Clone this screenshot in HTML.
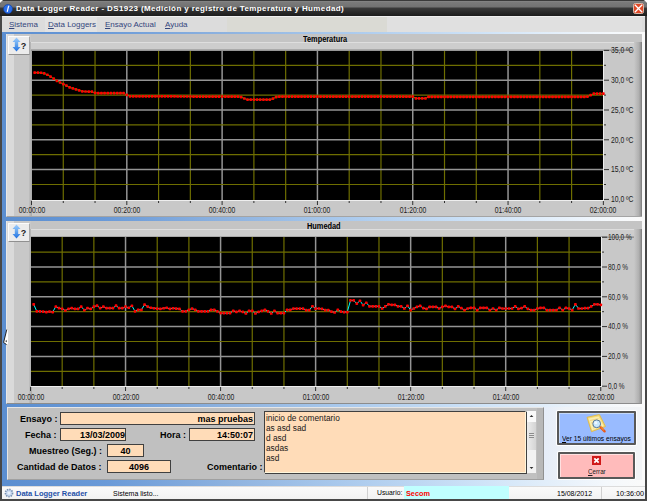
<!DOCTYPE html>
<html><head><meta charset="utf-8">
<style>
*{margin:0;padding:0;box-sizing:border-box}
html,body{width:647px;height:501px;overflow:hidden;background:#474747}
body{position:relative;font-family:"Liberation Sans",sans-serif;color:#000}
.a{position:absolute}
.t{position:absolute;white-space:nowrap;line-height:1}
.b{font-weight:bold}
</style></head><body>
<!-- title bar -->
<div class="a" style="left:0;top:0;width:647px;height:16px;background:linear-gradient(#3a3a3a 0,#3a3a3a 1px,#8a8a8a 1px,#7a7a7a 2px,#727272 7px,#3a3a3a 8px,#2e2e2e 11px,#1c1c1c 16px);border-radius:5px 5px 0 0"></div>
<div class="a" style="left:0;top:0;width:3px;height:3px;background:#fff;clip-path:polygon(0 0,100% 0,0 100%)"></div>
<div class="a" style="left:644px;top:0;width:3px;height:3px;background:#fff;clip-path:polygon(0 0,100% 0,100% 100%)"></div>
<svg class="a" style="left:3px;top:4px" width="10" height="10" viewBox="0 0 10 10"><circle cx="5" cy="5" r="4.5" fill="#2a6ee8"/><circle cx="5" cy="5" r="4.5" fill="none" stroke="#1040a0" stroke-width="0.6"/><path d="M5.6 2.2 L4.2 7.8" stroke="#fff" stroke-width="1.2"/><circle cx="5.8" cy="2" r="0.6" fill="#fff"/></svg>
<div class="t b" style="left:16px;top:5px;font-size:8px;color:#fff;letter-spacing:0.38px">Data Logger Reader - DS1923 (Medición y registro de Temperatura y Humedad)</div>
<svg class="a" style="left:633px;top:3px" width="11" height="11" viewBox="0 0 11 11"><rect x="0.5" y="0.5" width="10" height="10" rx="1.8" fill="#d84020" stroke="#e0c4b4" stroke-width="0.9"/><rect x="1.2" y="1.2" width="8.6" height="8.6" rx="1" fill="#e04a28"/><path d="M1.8 1.8 L9.2 9.2 M9.2 1.8 L1.8 9.2" stroke="#fff" stroke-width="1.3"/></svg>
<!-- menu -->
<div class="a" style="left:2px;top:16px;width:643px;height:16px;background:#dcdcdc;border-top:1px solid #f0f0f0"></div>
<div class="a" style="left:45px;top:17px;width:52px;height:15px;background:#e2e2e2"></div>
<div class="a" style="left:227px;top:17px;width:160px;height:15px;background:#dadad4"></div>
<div class="a" style="left:387px;top:17px;width:255px;height:15px;background:#e0e0e0"></div>
<div class="t" style="left:9px;top:21px;font-size:8px;color:#34467c"><u>S</u>istema</div>
<div class="t" style="left:48px;top:21px;font-size:8px;color:#34467c"><u>D</u>ata Loggers</div>
<div class="t" style="left:105px;top:21px;font-size:8px;color:#34467c"><u>E</u>nsayo Actual</div>
<div class="t" style="left:165px;top:21px;font-size:8px;color:#34467c"><u>A</u>yuda</div>
<!-- blue line + strips -->
<div class="a" style="left:2px;top:32px;width:643px;height:2px;background:linear-gradient(90deg,#5b8ed0 0,#6a9ad8 15.7%,#90b4e0 36%,#a8c8ec 52%,#d0e4f8 75.6%,#f4f8fc 94.5%,#fafafa 100%)"></div>
<div class="a" style="left:2px;top:32px;width:5px;height:454px;background:#5b8ed0"></div>
<div class="a" style="left:642px;top:32px;width:3px;height:454px;background:#fafafa"></div>
<div class="a" style="left:7px;top:217px;width:635px;height:4px;background:linear-gradient(90deg,#5b8ed0 0,#6a9ad8 15.7%,#90b4e0 36%,#a8c8ec 52%,#d0e4f8 75.6%,#f4f8fc 94.5%,#fafafa 100%)"></div>
<div class="a" style="left:7px;top:480px;width:635px;height:6px;background:linear-gradient(90deg,#5b8ed0 0,#6a9ad8 15.7%,#90b4e0 36%,#a8c8ec 52%,#d0e4f8 75.6%,#f4f8fc 94.5%,#fafafa 100%)"></div>

<!-- panel 1 -->
<div class="a" style="left:6px;top:34px;width:636px;height:183px;background:#c8c8c8;border-left:1px solid #e8e8e8;border-bottom:1px solid #a4a4a4"></div>
<div class="a" style="left:7px;top:34px;width:7px;height:182px;background:#dadada"></div>
<div class="a" style="left:29px;top:42px;width:3px;height:174px;background:linear-gradient(90deg,#c0c0c0,#a8a8a8)"></div>
<div class="a" style="left:31px;top:34px;width:611px;height:8px;background:#c4c4c4"></div>
<div class="a" style="left:31px;top:42px;width:611px;height:1px;background:#dedede"></div>
<div class="a" style="left:31px;top:43px;width:603px;height:6px;background:#cdcdcd"></div>
<div class="a" style="left:31px;top:49px;width:603px;height:2px;background:linear-gradient(#b4b4b4,#8c8c8c)"></div>
<div class="a" style="left:634px;top:42px;width:8px;height:174px;background:linear-gradient(90deg,#c8c8c8,#b0b0b0 60%,#909090 90%,#707070)"></div>
<div class="t b" style="left:303px;top:35px;font-size:9px;transform:scaleX(0.82);transform-origin:0 0">Temperatura</div>
<svg class="a" style="left:7px;top:34px" width="635" height="183"><rect x="25" y="17" width="571" height="149" fill="#000"/>
<line x1="56.27" y1="17" x2="56.27" y2="166" stroke="#6e6e00" stroke-width="1.2"/>
<line x1="88.04" y1="17" x2="88.04" y2="166" stroke="#6e6e00" stroke-width="1.2"/>
<line x1="119.81" y1="17" x2="119.81" y2="166" stroke="#949494" stroke-width="1.5"/>
<line x1="151.58" y1="17" x2="151.58" y2="166" stroke="#6e6e00" stroke-width="1.2"/>
<line x1="183.35" y1="17" x2="183.35" y2="166" stroke="#6e6e00" stroke-width="1.2"/>
<line x1="215.12" y1="17" x2="215.12" y2="166" stroke="#949494" stroke-width="1.5"/>
<line x1="246.89" y1="17" x2="246.89" y2="166" stroke="#6e6e00" stroke-width="1.2"/>
<line x1="278.66" y1="17" x2="278.66" y2="166" stroke="#6e6e00" stroke-width="1.2"/>
<line x1="310.43" y1="17" x2="310.43" y2="166" stroke="#949494" stroke-width="1.5"/>
<line x1="342.20" y1="17" x2="342.20" y2="166" stroke="#6e6e00" stroke-width="1.2"/>
<line x1="373.97" y1="17" x2="373.97" y2="166" stroke="#6e6e00" stroke-width="1.2"/>
<line x1="405.74" y1="17" x2="405.74" y2="166" stroke="#949494" stroke-width="1.5"/>
<line x1="437.51" y1="17" x2="437.51" y2="166" stroke="#6e6e00" stroke-width="1.2"/>
<line x1="469.28" y1="17" x2="469.28" y2="166" stroke="#6e6e00" stroke-width="1.2"/>
<line x1="501.05" y1="17" x2="501.05" y2="166" stroke="#949494" stroke-width="1.5"/>
<line x1="532.82" y1="17" x2="532.82" y2="166" stroke="#6e6e00" stroke-width="1.2"/>
<line x1="564.59" y1="17" x2="564.59" y2="166" stroke="#6e6e00" stroke-width="1.2"/>
<line x1="25" y1="31.30" x2="596" y2="31.30" stroke="#6e6e00" stroke-width="1.2"/>
<line x1="25" y1="46.20" x2="596" y2="46.20" stroke="#949494" stroke-width="1.5"/>
<line x1="25" y1="61.10" x2="596" y2="61.10" stroke="#6e6e00" stroke-width="1.2"/>
<line x1="25" y1="76.00" x2="596" y2="76.00" stroke="#949494" stroke-width="1.5"/>
<line x1="25" y1="90.90" x2="596" y2="90.90" stroke="#6e6e00" stroke-width="1.2"/>
<line x1="25" y1="105.80" x2="596" y2="105.80" stroke="#949494" stroke-width="1.5"/>
<line x1="25" y1="120.70" x2="596" y2="120.70" stroke="#6e6e00" stroke-width="1.2"/>
<line x1="25" y1="135.60" x2="596" y2="135.60" stroke="#949494" stroke-width="1.5"/>
<line x1="25" y1="150.50" x2="596" y2="150.50" stroke="#6e6e00" stroke-width="1.2"/>
<line x1="25" y1="166.5" x2="597" y2="166.5" stroke="#eeeeee" stroke-width="1"/>
<line x1="596.5" y1="17" x2="596.5" y2="167" stroke="#eeeeee" stroke-width="1"/>
<line x1="24.50" y1="167" x2="24.50" y2="171" stroke="#303030" stroke-width="1"/>
<line x1="56.27" y1="167" x2="56.27" y2="169" stroke="#303030" stroke-width="1"/>
<line x1="88.04" y1="167" x2="88.04" y2="169" stroke="#303030" stroke-width="1"/>
<line x1="119.81" y1="167" x2="119.81" y2="171" stroke="#303030" stroke-width="1"/>
<line x1="151.58" y1="167" x2="151.58" y2="169" stroke="#303030" stroke-width="1"/>
<line x1="183.35" y1="167" x2="183.35" y2="169" stroke="#303030" stroke-width="1"/>
<line x1="215.12" y1="167" x2="215.12" y2="171" stroke="#303030" stroke-width="1"/>
<line x1="246.89" y1="167" x2="246.89" y2="169" stroke="#303030" stroke-width="1"/>
<line x1="278.66" y1="167" x2="278.66" y2="169" stroke="#303030" stroke-width="1"/>
<line x1="310.43" y1="167" x2="310.43" y2="171" stroke="#303030" stroke-width="1"/>
<line x1="342.20" y1="167" x2="342.20" y2="169" stroke="#303030" stroke-width="1"/>
<line x1="373.97" y1="167" x2="373.97" y2="169" stroke="#303030" stroke-width="1"/>
<line x1="405.74" y1="167" x2="405.74" y2="171" stroke="#303030" stroke-width="1"/>
<line x1="437.51" y1="167" x2="437.51" y2="169" stroke="#303030" stroke-width="1"/>
<line x1="469.28" y1="167" x2="469.28" y2="169" stroke="#303030" stroke-width="1"/>
<line x1="501.05" y1="167" x2="501.05" y2="171" stroke="#303030" stroke-width="1"/>
<line x1="532.82" y1="167" x2="532.82" y2="169" stroke="#303030" stroke-width="1"/>
<line x1="564.59" y1="167" x2="564.59" y2="169" stroke="#303030" stroke-width="1"/>
<line x1="596.36" y1="167" x2="596.36" y2="171" stroke="#303030" stroke-width="1"/>
<line x1="597" y1="16.40" x2="602" y2="16.40" stroke="#303030" stroke-width="1"/>
<line x1="597" y1="31.30" x2="599" y2="31.30" stroke="#303030" stroke-width="1"/>
<line x1="597" y1="46.20" x2="602" y2="46.20" stroke="#303030" stroke-width="1"/>
<line x1="597" y1="61.10" x2="599" y2="61.10" stroke="#303030" stroke-width="1"/>
<line x1="597" y1="76.00" x2="602" y2="76.00" stroke="#303030" stroke-width="1"/>
<line x1="597" y1="90.90" x2="599" y2="90.90" stroke="#303030" stroke-width="1"/>
<line x1="597" y1="105.80" x2="602" y2="105.80" stroke="#303030" stroke-width="1"/>
<line x1="597" y1="120.70" x2="599" y2="120.70" stroke="#303030" stroke-width="1"/>
<line x1="597" y1="135.60" x2="602" y2="135.60" stroke="#303030" stroke-width="1"/>
<line x1="597" y1="150.50" x2="599" y2="150.50" stroke="#303030" stroke-width="1"/>
<line x1="597" y1="165.40" x2="602" y2="165.40" stroke="#303030" stroke-width="1"/>
<path d="M27.7,38.6 L30.9,38.7 L34.0,38.8 L37.2,39.5 L40.4,40.8 L43.6,42.6 L46.7,44.7 L49.9,46.8 L53.1,48.5 L56.3,50.1 L59.4,51.7 L62.6,53.3 L65.8,54.4 L69.0,55.4 L72.2,56.4 L75.3,57.3 L78.5,57.5 L81.7,57.6 L84.9,57.7 L88.0,58.8 L91.2,59.2 L94.4,59.2 L97.6,59.2 L100.7,59.2 L103.9,59.2 L107.1,59.2 L110.3,59.2 L113.5,59.2 L116.6,59.2 L119.8,60.9 L123.0,62.3 L126.2,62.3 L129.3,62.3 L132.5,62.3 L135.7,62.3 L138.9,62.4 L142.0,62.4 L145.2,62.4 L148.4,62.4 L151.6,62.4 L154.8,62.4 L157.9,62.4 L161.1,62.4 L164.3,62.5 L167.5,62.5 L170.6,62.5 L173.8,62.5 L177.0,62.5 L180.2,62.5 L183.3,62.5 L186.5,62.5 L189.7,62.5 L192.9,62.6 L196.1,62.6 L199.2,62.6 L202.4,62.6 L205.6,62.6 L208.8,62.6 L211.9,62.6 L215.1,62.6 L218.3,62.6 L221.5,62.7 L224.7,62.7 L227.8,62.7 L231.0,62.7 L234.2,63.2 L237.4,64.5 L240.5,65.6 L243.7,65.6 L246.9,65.6 L250.1,65.6 L253.2,65.6 L256.4,65.6 L259.6,65.6 L262.8,65.6 L266.0,64.7 L269.1,63.1 L272.3,62.7 L275.5,62.7 L278.7,62.7 L281.8,62.7 L285.0,62.7 L288.2,62.7 L291.4,62.7 L294.5,62.7 L297.7,62.7 L300.9,62.7 L304.1,62.7 L307.3,62.7 L310.4,62.7 L313.6,62.7 L316.8,62.7 L320.0,62.7 L323.1,62.7 L326.3,62.7 L329.5,62.7 L332.7,62.7 L335.8,62.7 L339.0,62.7 L342.2,62.7 L345.4,62.7 L348.6,62.7 L351.7,62.7 L354.9,62.7 L358.1,62.7 L361.3,62.7 L364.4,62.7 L367.6,62.7 L370.8,62.7 L374.0,62.7 L377.1,62.7 L380.3,62.7 L383.5,62.7 L386.7,62.7 L389.9,62.7 L393.0,62.7 L396.2,62.7 L399.4,62.7 L402.6,62.7 L405.7,62.7 L408.9,64.3 L412.1,64.4 L415.3,64.4 L418.4,64.4 L421.6,62.9 L424.8,62.9 L428.0,62.9 L431.2,62.9 L434.3,62.9 L437.5,62.9 L440.7,62.9 L443.9,62.9 L447.0,62.9 L450.2,62.9 L453.4,62.9 L456.6,62.9 L459.7,62.9 L462.9,62.9 L466.1,62.9 L469.3,62.9 L472.5,62.9 L475.6,62.9 L478.8,62.9 L482.0,62.9 L485.2,62.9 L488.3,62.9 L491.5,62.9 L494.7,62.9 L497.9,62.9 L501.1,62.9 L504.2,62.9 L507.4,62.9 L510.6,62.9 L513.8,62.9 L516.9,62.9 L520.1,62.9 L523.3,62.9 L526.5,62.9 L529.6,62.9 L532.8,62.9 L536.0,62.9 L539.2,62.9 L542.4,62.9 L545.5,62.9 L548.7,62.9 L551.9,62.9 L555.1,62.9 L558.2,62.9 L561.4,62.9 L564.6,62.9 L567.8,62.9 L570.9,62.9 L574.1,62.9 L577.3,62.9 L580.5,62.7 L583.7,61.2 L586.8,59.7 L590.0,59.6 L593.2,59.6 L596.4,59.6" fill="none" stroke="#00ff00" stroke-width="1"/>
<rect x="26.33" y="37.23" width="2.7" height="2.7" rx="0.7" fill="#ff0000"/>
<rect x="29.50" y="37.33" width="2.7" height="2.7" rx="0.7" fill="#ff0000"/>
<rect x="32.68" y="37.42" width="2.7" height="2.7" rx="0.7" fill="#ff0000"/>
<rect x="35.86" y="38.11" width="2.7" height="2.7" rx="0.7" fill="#ff0000"/>
<rect x="39.04" y="39.41" width="2.7" height="2.7" rx="0.7" fill="#ff0000"/>
<rect x="42.21" y="41.23" width="2.7" height="2.7" rx="0.7" fill="#ff0000"/>
<rect x="45.39" y="43.36" width="2.7" height="2.7" rx="0.7" fill="#ff0000"/>
<rect x="48.57" y="45.49" width="2.7" height="2.7" rx="0.7" fill="#ff0000"/>
<rect x="51.74" y="47.15" width="2.7" height="2.7" rx="0.7" fill="#ff0000"/>
<rect x="54.92" y="48.79" width="2.7" height="2.7" rx="0.7" fill="#ff0000"/>
<rect x="58.10" y="50.37" width="2.7" height="2.7" rx="0.7" fill="#ff0000"/>
<rect x="61.27" y="51.96" width="2.7" height="2.7" rx="0.7" fill="#ff0000"/>
<rect x="64.45" y="53.04" width="2.7" height="2.7" rx="0.7" fill="#ff0000"/>
<rect x="67.63" y="54.04" width="2.7" height="2.7" rx="0.7" fill="#ff0000"/>
<rect x="70.81" y="55.02" width="2.7" height="2.7" rx="0.7" fill="#ff0000"/>
<rect x="73.98" y="56.00" width="2.7" height="2.7" rx="0.7" fill="#ff0000"/>
<rect x="77.16" y="56.15" width="2.7" height="2.7" rx="0.7" fill="#ff0000"/>
<rect x="80.34" y="56.25" width="2.7" height="2.7" rx="0.7" fill="#ff0000"/>
<rect x="83.51" y="56.35" width="2.7" height="2.7" rx="0.7" fill="#ff0000"/>
<rect x="86.69" y="57.49" width="2.7" height="2.7" rx="0.7" fill="#ff0000"/>
<rect x="89.87" y="57.85" width="2.7" height="2.7" rx="0.7" fill="#ff0000"/>
<rect x="93.04" y="57.85" width="2.7" height="2.7" rx="0.7" fill="#ff0000"/>
<rect x="96.22" y="57.85" width="2.7" height="2.7" rx="0.7" fill="#ff0000"/>
<rect x="99.40" y="57.85" width="2.7" height="2.7" rx="0.7" fill="#ff0000"/>
<rect x="102.58" y="57.85" width="2.7" height="2.7" rx="0.7" fill="#ff0000"/>
<rect x="105.75" y="57.85" width="2.7" height="2.7" rx="0.7" fill="#ff0000"/>
<rect x="108.93" y="57.85" width="2.7" height="2.7" rx="0.7" fill="#ff0000"/>
<rect x="112.11" y="57.85" width="2.7" height="2.7" rx="0.7" fill="#ff0000"/>
<rect x="115.28" y="57.85" width="2.7" height="2.7" rx="0.7" fill="#ff0000"/>
<rect x="118.46" y="59.59" width="2.7" height="2.7" rx="0.7" fill="#ff0000"/>
<rect x="121.64" y="60.95" width="2.7" height="2.7" rx="0.7" fill="#ff0000"/>
<rect x="124.81" y="60.97" width="2.7" height="2.7" rx="0.7" fill="#ff0000"/>
<rect x="127.99" y="60.98" width="2.7" height="2.7" rx="0.7" fill="#ff0000"/>
<rect x="131.17" y="60.99" width="2.7" height="2.7" rx="0.7" fill="#ff0000"/>
<rect x="134.34" y="61.00" width="2.7" height="2.7" rx="0.7" fill="#ff0000"/>
<rect x="137.52" y="61.01" width="2.7" height="2.7" rx="0.7" fill="#ff0000"/>
<rect x="140.70" y="61.02" width="2.7" height="2.7" rx="0.7" fill="#ff0000"/>
<rect x="143.88" y="61.03" width="2.7" height="2.7" rx="0.7" fill="#ff0000"/>
<rect x="147.05" y="61.05" width="2.7" height="2.7" rx="0.7" fill="#ff0000"/>
<rect x="150.23" y="61.06" width="2.7" height="2.7" rx="0.7" fill="#ff0000"/>
<rect x="153.41" y="61.07" width="2.7" height="2.7" rx="0.7" fill="#ff0000"/>
<rect x="156.58" y="61.08" width="2.7" height="2.7" rx="0.7" fill="#ff0000"/>
<rect x="159.76" y="61.09" width="2.7" height="2.7" rx="0.7" fill="#ff0000"/>
<rect x="162.94" y="61.10" width="2.7" height="2.7" rx="0.7" fill="#ff0000"/>
<rect x="166.12" y="61.11" width="2.7" height="2.7" rx="0.7" fill="#ff0000"/>
<rect x="169.29" y="61.13" width="2.7" height="2.7" rx="0.7" fill="#ff0000"/>
<rect x="172.47" y="61.14" width="2.7" height="2.7" rx="0.7" fill="#ff0000"/>
<rect x="175.65" y="61.15" width="2.7" height="2.7" rx="0.7" fill="#ff0000"/>
<rect x="178.82" y="61.16" width="2.7" height="2.7" rx="0.7" fill="#ff0000"/>
<rect x="182.00" y="61.17" width="2.7" height="2.7" rx="0.7" fill="#ff0000"/>
<rect x="185.18" y="61.18" width="2.7" height="2.7" rx="0.7" fill="#ff0000"/>
<rect x="188.35" y="61.19" width="2.7" height="2.7" rx="0.7" fill="#ff0000"/>
<rect x="191.53" y="61.21" width="2.7" height="2.7" rx="0.7" fill="#ff0000"/>
<rect x="194.71" y="61.22" width="2.7" height="2.7" rx="0.7" fill="#ff0000"/>
<rect x="197.88" y="61.23" width="2.7" height="2.7" rx="0.7" fill="#ff0000"/>
<rect x="201.06" y="61.24" width="2.7" height="2.7" rx="0.7" fill="#ff0000"/>
<rect x="204.24" y="61.25" width="2.7" height="2.7" rx="0.7" fill="#ff0000"/>
<rect x="207.42" y="61.26" width="2.7" height="2.7" rx="0.7" fill="#ff0000"/>
<rect x="210.59" y="61.27" width="2.7" height="2.7" rx="0.7" fill="#ff0000"/>
<rect x="213.77" y="61.29" width="2.7" height="2.7" rx="0.7" fill="#ff0000"/>
<rect x="216.95" y="61.30" width="2.7" height="2.7" rx="0.7" fill="#ff0000"/>
<rect x="220.12" y="61.31" width="2.7" height="2.7" rx="0.7" fill="#ff0000"/>
<rect x="223.30" y="61.32" width="2.7" height="2.7" rx="0.7" fill="#ff0000"/>
<rect x="226.48" y="61.33" width="2.7" height="2.7" rx="0.7" fill="#ff0000"/>
<rect x="229.66" y="61.34" width="2.7" height="2.7" rx="0.7" fill="#ff0000"/>
<rect x="232.83" y="61.84" width="2.7" height="2.7" rx="0.7" fill="#ff0000"/>
<rect x="236.01" y="63.16" width="2.7" height="2.7" rx="0.7" fill="#ff0000"/>
<rect x="239.19" y="64.25" width="2.7" height="2.7" rx="0.7" fill="#ff0000"/>
<rect x="242.36" y="64.25" width="2.7" height="2.7" rx="0.7" fill="#ff0000"/>
<rect x="245.54" y="64.25" width="2.7" height="2.7" rx="0.7" fill="#ff0000"/>
<rect x="248.72" y="64.25" width="2.7" height="2.7" rx="0.7" fill="#ff0000"/>
<rect x="251.89" y="64.25" width="2.7" height="2.7" rx="0.7" fill="#ff0000"/>
<rect x="255.07" y="64.25" width="2.7" height="2.7" rx="0.7" fill="#ff0000"/>
<rect x="258.25" y="64.25" width="2.7" height="2.7" rx="0.7" fill="#ff0000"/>
<rect x="261.42" y="64.25" width="2.7" height="2.7" rx="0.7" fill="#ff0000"/>
<rect x="264.60" y="63.31" width="2.7" height="2.7" rx="0.7" fill="#ff0000"/>
<rect x="267.78" y="61.77" width="2.7" height="2.7" rx="0.7" fill="#ff0000"/>
<rect x="270.96" y="61.35" width="2.7" height="2.7" rx="0.7" fill="#ff0000"/>
<rect x="274.13" y="61.35" width="2.7" height="2.7" rx="0.7" fill="#ff0000"/>
<rect x="277.31" y="61.35" width="2.7" height="2.7" rx="0.7" fill="#ff0000"/>
<rect x="280.49" y="61.35" width="2.7" height="2.7" rx="0.7" fill="#ff0000"/>
<rect x="283.66" y="61.35" width="2.7" height="2.7" rx="0.7" fill="#ff0000"/>
<rect x="286.84" y="61.35" width="2.7" height="2.7" rx="0.7" fill="#ff0000"/>
<rect x="290.02" y="61.35" width="2.7" height="2.7" rx="0.7" fill="#ff0000"/>
<rect x="293.19" y="61.35" width="2.7" height="2.7" rx="0.7" fill="#ff0000"/>
<rect x="296.37" y="61.35" width="2.7" height="2.7" rx="0.7" fill="#ff0000"/>
<rect x="299.55" y="61.35" width="2.7" height="2.7" rx="0.7" fill="#ff0000"/>
<rect x="302.73" y="61.35" width="2.7" height="2.7" rx="0.7" fill="#ff0000"/>
<rect x="305.90" y="61.35" width="2.7" height="2.7" rx="0.7" fill="#ff0000"/>
<rect x="309.08" y="61.35" width="2.7" height="2.7" rx="0.7" fill="#ff0000"/>
<rect x="312.26" y="61.35" width="2.7" height="2.7" rx="0.7" fill="#ff0000"/>
<rect x="315.43" y="61.35" width="2.7" height="2.7" rx="0.7" fill="#ff0000"/>
<rect x="318.61" y="61.35" width="2.7" height="2.7" rx="0.7" fill="#ff0000"/>
<rect x="321.79" y="61.35" width="2.7" height="2.7" rx="0.7" fill="#ff0000"/>
<rect x="324.96" y="61.35" width="2.7" height="2.7" rx="0.7" fill="#ff0000"/>
<rect x="328.14" y="61.35" width="2.7" height="2.7" rx="0.7" fill="#ff0000"/>
<rect x="331.32" y="61.35" width="2.7" height="2.7" rx="0.7" fill="#ff0000"/>
<rect x="334.50" y="61.35" width="2.7" height="2.7" rx="0.7" fill="#ff0000"/>
<rect x="337.67" y="61.35" width="2.7" height="2.7" rx="0.7" fill="#ff0000"/>
<rect x="340.85" y="61.35" width="2.7" height="2.7" rx="0.7" fill="#ff0000"/>
<rect x="344.03" y="61.35" width="2.7" height="2.7" rx="0.7" fill="#ff0000"/>
<rect x="347.20" y="61.35" width="2.7" height="2.7" rx="0.7" fill="#ff0000"/>
<rect x="350.38" y="61.35" width="2.7" height="2.7" rx="0.7" fill="#ff0000"/>
<rect x="353.56" y="61.35" width="2.7" height="2.7" rx="0.7" fill="#ff0000"/>
<rect x="356.74" y="61.35" width="2.7" height="2.7" rx="0.7" fill="#ff0000"/>
<rect x="359.91" y="61.35" width="2.7" height="2.7" rx="0.7" fill="#ff0000"/>
<rect x="363.09" y="61.35" width="2.7" height="2.7" rx="0.7" fill="#ff0000"/>
<rect x="366.27" y="61.35" width="2.7" height="2.7" rx="0.7" fill="#ff0000"/>
<rect x="369.44" y="61.35" width="2.7" height="2.7" rx="0.7" fill="#ff0000"/>
<rect x="372.62" y="61.35" width="2.7" height="2.7" rx="0.7" fill="#ff0000"/>
<rect x="375.80" y="61.35" width="2.7" height="2.7" rx="0.7" fill="#ff0000"/>
<rect x="378.97" y="61.35" width="2.7" height="2.7" rx="0.7" fill="#ff0000"/>
<rect x="382.15" y="61.35" width="2.7" height="2.7" rx="0.7" fill="#ff0000"/>
<rect x="385.33" y="61.35" width="2.7" height="2.7" rx="0.7" fill="#ff0000"/>
<rect x="388.51" y="61.35" width="2.7" height="2.7" rx="0.7" fill="#ff0000"/>
<rect x="391.68" y="61.35" width="2.7" height="2.7" rx="0.7" fill="#ff0000"/>
<rect x="394.86" y="61.35" width="2.7" height="2.7" rx="0.7" fill="#ff0000"/>
<rect x="398.04" y="61.35" width="2.7" height="2.7" rx="0.7" fill="#ff0000"/>
<rect x="401.21" y="61.35" width="2.7" height="2.7" rx="0.7" fill="#ff0000"/>
<rect x="404.39" y="61.35" width="2.7" height="2.7" rx="0.7" fill="#ff0000"/>
<rect x="407.57" y="62.98" width="2.7" height="2.7" rx="0.7" fill="#ff0000"/>
<rect x="410.74" y="63.05" width="2.7" height="2.7" rx="0.7" fill="#ff0000"/>
<rect x="413.92" y="63.05" width="2.7" height="2.7" rx="0.7" fill="#ff0000"/>
<rect x="417.10" y="63.05" width="2.7" height="2.7" rx="0.7" fill="#ff0000"/>
<rect x="420.27" y="61.55" width="2.7" height="2.7" rx="0.7" fill="#ff0000"/>
<rect x="423.45" y="61.55" width="2.7" height="2.7" rx="0.7" fill="#ff0000"/>
<rect x="426.63" y="61.55" width="2.7" height="2.7" rx="0.7" fill="#ff0000"/>
<rect x="429.81" y="61.55" width="2.7" height="2.7" rx="0.7" fill="#ff0000"/>
<rect x="432.98" y="61.55" width="2.7" height="2.7" rx="0.7" fill="#ff0000"/>
<rect x="436.16" y="61.55" width="2.7" height="2.7" rx="0.7" fill="#ff0000"/>
<rect x="439.34" y="61.55" width="2.7" height="2.7" rx="0.7" fill="#ff0000"/>
<rect x="442.51" y="61.55" width="2.7" height="2.7" rx="0.7" fill="#ff0000"/>
<rect x="445.69" y="61.55" width="2.7" height="2.7" rx="0.7" fill="#ff0000"/>
<rect x="448.87" y="61.55" width="2.7" height="2.7" rx="0.7" fill="#ff0000"/>
<rect x="452.05" y="61.55" width="2.7" height="2.7" rx="0.7" fill="#ff0000"/>
<rect x="455.22" y="61.55" width="2.7" height="2.7" rx="0.7" fill="#ff0000"/>
<rect x="458.40" y="61.55" width="2.7" height="2.7" rx="0.7" fill="#ff0000"/>
<rect x="461.58" y="61.55" width="2.7" height="2.7" rx="0.7" fill="#ff0000"/>
<rect x="464.75" y="61.55" width="2.7" height="2.7" rx="0.7" fill="#ff0000"/>
<rect x="467.93" y="61.55" width="2.7" height="2.7" rx="0.7" fill="#ff0000"/>
<rect x="471.11" y="61.55" width="2.7" height="2.7" rx="0.7" fill="#ff0000"/>
<rect x="474.28" y="61.55" width="2.7" height="2.7" rx="0.7" fill="#ff0000"/>
<rect x="477.46" y="61.55" width="2.7" height="2.7" rx="0.7" fill="#ff0000"/>
<rect x="480.64" y="61.55" width="2.7" height="2.7" rx="0.7" fill="#ff0000"/>
<rect x="483.81" y="61.55" width="2.7" height="2.7" rx="0.7" fill="#ff0000"/>
<rect x="486.99" y="61.55" width="2.7" height="2.7" rx="0.7" fill="#ff0000"/>
<rect x="490.17" y="61.55" width="2.7" height="2.7" rx="0.7" fill="#ff0000"/>
<rect x="493.35" y="61.55" width="2.7" height="2.7" rx="0.7" fill="#ff0000"/>
<rect x="496.52" y="61.55" width="2.7" height="2.7" rx="0.7" fill="#ff0000"/>
<rect x="499.70" y="61.55" width="2.7" height="2.7" rx="0.7" fill="#ff0000"/>
<rect x="502.88" y="61.55" width="2.7" height="2.7" rx="0.7" fill="#ff0000"/>
<rect x="506.05" y="61.55" width="2.7" height="2.7" rx="0.7" fill="#ff0000"/>
<rect x="509.23" y="61.55" width="2.7" height="2.7" rx="0.7" fill="#ff0000"/>
<rect x="512.41" y="61.55" width="2.7" height="2.7" rx="0.7" fill="#ff0000"/>
<rect x="515.58" y="61.55" width="2.7" height="2.7" rx="0.7" fill="#ff0000"/>
<rect x="518.76" y="61.55" width="2.7" height="2.7" rx="0.7" fill="#ff0000"/>
<rect x="521.94" y="61.55" width="2.7" height="2.7" rx="0.7" fill="#ff0000"/>
<rect x="525.12" y="61.55" width="2.7" height="2.7" rx="0.7" fill="#ff0000"/>
<rect x="528.29" y="61.55" width="2.7" height="2.7" rx="0.7" fill="#ff0000"/>
<rect x="531.47" y="61.55" width="2.7" height="2.7" rx="0.7" fill="#ff0000"/>
<rect x="534.65" y="61.55" width="2.7" height="2.7" rx="0.7" fill="#ff0000"/>
<rect x="537.82" y="61.55" width="2.7" height="2.7" rx="0.7" fill="#ff0000"/>
<rect x="541.00" y="61.55" width="2.7" height="2.7" rx="0.7" fill="#ff0000"/>
<rect x="544.18" y="61.55" width="2.7" height="2.7" rx="0.7" fill="#ff0000"/>
<rect x="547.36" y="61.55" width="2.7" height="2.7" rx="0.7" fill="#ff0000"/>
<rect x="550.53" y="61.55" width="2.7" height="2.7" rx="0.7" fill="#ff0000"/>
<rect x="553.71" y="61.55" width="2.7" height="2.7" rx="0.7" fill="#ff0000"/>
<rect x="556.89" y="61.55" width="2.7" height="2.7" rx="0.7" fill="#ff0000"/>
<rect x="560.06" y="61.55" width="2.7" height="2.7" rx="0.7" fill="#ff0000"/>
<rect x="563.24" y="61.55" width="2.7" height="2.7" rx="0.7" fill="#ff0000"/>
<rect x="566.42" y="61.55" width="2.7" height="2.7" rx="0.7" fill="#ff0000"/>
<rect x="569.59" y="61.55" width="2.7" height="2.7" rx="0.7" fill="#ff0000"/>
<rect x="572.77" y="61.55" width="2.7" height="2.7" rx="0.7" fill="#ff0000"/>
<rect x="575.95" y="61.55" width="2.7" height="2.7" rx="0.7" fill="#ff0000"/>
<rect x="579.12" y="61.33" width="2.7" height="2.7" rx="0.7" fill="#ff0000"/>
<rect x="582.30" y="59.83" width="2.7" height="2.7" rx="0.7" fill="#ff0000"/>
<rect x="585.48" y="58.33" width="2.7" height="2.7" rx="0.7" fill="#ff0000"/>
<rect x="588.66" y="58.25" width="2.7" height="2.7" rx="0.7" fill="#ff0000"/>
<rect x="591.83" y="58.25" width="2.7" height="2.7" rx="0.7" fill="#ff0000"/>
<rect x="595.01" y="58.25" width="2.7" height="2.7" rx="0.7" fill="#ff0000"/></svg>
<div class="a" style="left:8px;top:36px;width:22px;height:19px;background:#ececec;border:1px solid;border-color:#fcfcfc #a8a8a8 #909090 #fcfcfc"></div>
<svg class="a" style="left:12px;top:37px" width="16" height="16" viewBox="0 0 16 16"><defs><linearGradient id="ag34" x1="0" y1="0" x2="0" y2="1"><stop offset="0" stop-color="#9cccff"/><stop offset="0.45" stop-color="#6aaaf0"/><stop offset="1" stop-color="#1e6ee0"/></linearGradient></defs><path d="M4.5 0.5 L8.5 5 L6.2 5 L6.2 10 L8.5 10 L4.5 14.5 L0.5 10 L2.8 10 L2.8 5 L0.5 5 Z" fill="url(#ag34)"/><text x="8.8" y="11.5" font-family="Liberation Sans" font-weight="bold" font-size="9" fill="#202020">?</text></svg>
<div class="t" style="left:-18.5px;top:206px;width:100px;text-align:center;font-size:8.5px;transform:scaleX(0.8);transform-origin:50% 0;color:#202020">00:00:00</div>
<div class="t" style="left:76.8px;top:206px;width:100px;text-align:center;font-size:8.5px;transform:scaleX(0.8);transform-origin:50% 0;color:#202020">00:20:00</div>
<div class="t" style="left:172.1px;top:206px;width:100px;text-align:center;font-size:8.5px;transform:scaleX(0.8);transform-origin:50% 0;color:#202020">00:40:00</div>
<div class="t" style="left:267.4px;top:206px;width:100px;text-align:center;font-size:8.5px;transform:scaleX(0.8);transform-origin:50% 0;color:#202020">01:00:00</div>
<div class="t" style="left:362.7px;top:206px;width:100px;text-align:center;font-size:8.5px;transform:scaleX(0.8);transform-origin:50% 0;color:#202020">01:20:00</div>
<div class="t" style="left:458.1px;top:206px;width:100px;text-align:center;font-size:8.5px;transform:scaleX(0.8);transform-origin:50% 0;color:#202020">01:40:00</div>
<div class="t" style="left:553.4px;top:206px;width:100px;text-align:center;font-size:8.5px;transform:scaleX(0.8);transform-origin:50% 0;color:#202020">02:00:00</div>
<div class="t" style="left:611px;top:46.1px;font-size:8.5px;transform:scaleX(0.8);transform-origin:0 0;color:#202020">35,0 ºC</div>
<div class="t" style="left:611px;top:75.9px;font-size:8.5px;transform:scaleX(0.8);transform-origin:0 0;color:#202020">30,0 ºC</div>
<div class="t" style="left:611px;top:105.7px;font-size:8.5px;transform:scaleX(0.8);transform-origin:0 0;color:#202020">25,0 ºC</div>
<div class="t" style="left:611px;top:135.5px;font-size:8.5px;transform:scaleX(0.8);transform-origin:0 0;color:#202020">20,0 ºC</div>
<div class="t" style="left:611px;top:165.3px;font-size:8.5px;transform:scaleX(0.8);transform-origin:0 0;color:#202020">15,0 ºC</div>
<div class="t" style="left:611px;top:195.1px;font-size:8.5px;transform:scaleX(0.8);transform-origin:0 0;color:#202020">10,0 ºC</div>
<!-- panel 2 -->
<div class="a" style="left:6px;top:221px;width:636px;height:183px;background:#c8c8c8;border-left:1px solid #e8e8e8;border-bottom:1px solid #a4a4a4"></div>
<div class="a" style="left:7px;top:221px;width:7px;height:182px;background:#dadada"></div>
<div class="a" style="left:29px;top:229px;width:3px;height:174px;background:linear-gradient(90deg,#c0c0c0,#a8a8a8)"></div>
<div class="a" style="left:31px;top:221px;width:611px;height:8px;background:#c4c4c4"></div>
<div class="a" style="left:31px;top:229px;width:611px;height:1px;background:#dedede"></div>
<div class="a" style="left:31px;top:230px;width:603px;height:6px;background:#cdcdcd"></div>
<div class="a" style="left:31px;top:236px;width:603px;height:2px;background:linear-gradient(#b4b4b4,#8c8c8c)"></div>
<div class="a" style="left:634px;top:229px;width:8px;height:174px;background:linear-gradient(90deg,#c8c8c8,#b0b0b0 60%,#909090 90%,#707070)"></div>
<div class="t b" style="left:307px;top:222px;font-size:9px;transform:scaleX(0.82);transform-origin:0 0">Humedad</div>
<svg class="a" style="left:7px;top:221px" width="635" height="183"><rect x="24" y="16" width="570" height="149" fill="#000"/>
<line x1="55.18" y1="16" x2="55.18" y2="165" stroke="#6e6e00" stroke-width="1.2"/>
<line x1="86.86" y1="16" x2="86.86" y2="165" stroke="#6e6e00" stroke-width="1.2"/>
<line x1="118.54" y1="16" x2="118.54" y2="165" stroke="#949494" stroke-width="1.5"/>
<line x1="150.22" y1="16" x2="150.22" y2="165" stroke="#6e6e00" stroke-width="1.2"/>
<line x1="181.90" y1="16" x2="181.90" y2="165" stroke="#6e6e00" stroke-width="1.2"/>
<line x1="213.58" y1="16" x2="213.58" y2="165" stroke="#949494" stroke-width="1.5"/>
<line x1="245.26" y1="16" x2="245.26" y2="165" stroke="#6e6e00" stroke-width="1.2"/>
<line x1="276.94" y1="16" x2="276.94" y2="165" stroke="#6e6e00" stroke-width="1.2"/>
<line x1="308.62" y1="16" x2="308.62" y2="165" stroke="#949494" stroke-width="1.5"/>
<line x1="340.30" y1="16" x2="340.30" y2="165" stroke="#6e6e00" stroke-width="1.2"/>
<line x1="371.98" y1="16" x2="371.98" y2="165" stroke="#6e6e00" stroke-width="1.2"/>
<line x1="403.66" y1="16" x2="403.66" y2="165" stroke="#949494" stroke-width="1.5"/>
<line x1="435.34" y1="16" x2="435.34" y2="165" stroke="#6e6e00" stroke-width="1.2"/>
<line x1="467.02" y1="16" x2="467.02" y2="165" stroke="#6e6e00" stroke-width="1.2"/>
<line x1="498.70" y1="16" x2="498.70" y2="165" stroke="#949494" stroke-width="1.5"/>
<line x1="530.38" y1="16" x2="530.38" y2="165" stroke="#6e6e00" stroke-width="1.2"/>
<line x1="562.06" y1="16" x2="562.06" y2="165" stroke="#6e6e00" stroke-width="1.2"/>
<line x1="24" y1="31.10" x2="594" y2="31.10" stroke="#6e6e00" stroke-width="1.2"/>
<line x1="24" y1="46.00" x2="594" y2="46.00" stroke="#949494" stroke-width="1.5"/>
<line x1="24" y1="60.90" x2="594" y2="60.90" stroke="#6e6e00" stroke-width="1.2"/>
<line x1="24" y1="75.80" x2="594" y2="75.80" stroke="#949494" stroke-width="1.5"/>
<line x1="24" y1="90.70" x2="594" y2="90.70" stroke="#6e6e00" stroke-width="1.2"/>
<line x1="24" y1="105.60" x2="594" y2="105.60" stroke="#949494" stroke-width="1.5"/>
<line x1="24" y1="120.50" x2="594" y2="120.50" stroke="#6e6e00" stroke-width="1.2"/>
<line x1="24" y1="135.40" x2="594" y2="135.40" stroke="#949494" stroke-width="1.5"/>
<line x1="24" y1="150.30" x2="594" y2="150.30" stroke="#6e6e00" stroke-width="1.2"/>
<line x1="24" y1="165.5" x2="595" y2="165.5" stroke="#eeeeee" stroke-width="1"/>
<line x1="594.5" y1="16" x2="594.5" y2="166" stroke="#eeeeee" stroke-width="1"/>
<line x1="23.50" y1="166" x2="23.50" y2="170" stroke="#303030" stroke-width="1"/>
<line x1="55.18" y1="166" x2="55.18" y2="168" stroke="#303030" stroke-width="1"/>
<line x1="86.86" y1="166" x2="86.86" y2="168" stroke="#303030" stroke-width="1"/>
<line x1="118.54" y1="166" x2="118.54" y2="170" stroke="#303030" stroke-width="1"/>
<line x1="150.22" y1="166" x2="150.22" y2="168" stroke="#303030" stroke-width="1"/>
<line x1="181.90" y1="166" x2="181.90" y2="168" stroke="#303030" stroke-width="1"/>
<line x1="213.58" y1="166" x2="213.58" y2="170" stroke="#303030" stroke-width="1"/>
<line x1="245.26" y1="166" x2="245.26" y2="168" stroke="#303030" stroke-width="1"/>
<line x1="276.94" y1="166" x2="276.94" y2="168" stroke="#303030" stroke-width="1"/>
<line x1="308.62" y1="166" x2="308.62" y2="170" stroke="#303030" stroke-width="1"/>
<line x1="340.30" y1="166" x2="340.30" y2="168" stroke="#303030" stroke-width="1"/>
<line x1="371.98" y1="166" x2="371.98" y2="168" stroke="#303030" stroke-width="1"/>
<line x1="403.66" y1="166" x2="403.66" y2="170" stroke="#303030" stroke-width="1"/>
<line x1="435.34" y1="166" x2="435.34" y2="168" stroke="#303030" stroke-width="1"/>
<line x1="467.02" y1="166" x2="467.02" y2="168" stroke="#303030" stroke-width="1"/>
<line x1="498.70" y1="166" x2="498.70" y2="170" stroke="#303030" stroke-width="1"/>
<line x1="530.38" y1="166" x2="530.38" y2="168" stroke="#303030" stroke-width="1"/>
<line x1="562.06" y1="166" x2="562.06" y2="168" stroke="#303030" stroke-width="1"/>
<line x1="593.74" y1="166" x2="593.74" y2="170" stroke="#303030" stroke-width="1"/>
<line x1="595" y1="16.20" x2="600" y2="16.20" stroke="#303030" stroke-width="1"/>
<line x1="595" y1="31.10" x2="597" y2="31.10" stroke="#303030" stroke-width="1"/>
<line x1="595" y1="46.00" x2="600" y2="46.00" stroke="#303030" stroke-width="1"/>
<line x1="595" y1="60.90" x2="597" y2="60.90" stroke="#303030" stroke-width="1"/>
<line x1="595" y1="75.80" x2="600" y2="75.80" stroke="#303030" stroke-width="1"/>
<line x1="595" y1="90.70" x2="597" y2="90.70" stroke="#303030" stroke-width="1"/>
<line x1="595" y1="105.60" x2="600" y2="105.60" stroke="#303030" stroke-width="1"/>
<line x1="595" y1="120.50" x2="597" y2="120.50" stroke="#303030" stroke-width="1"/>
<line x1="595" y1="135.40" x2="600" y2="135.40" stroke="#303030" stroke-width="1"/>
<line x1="595" y1="150.30" x2="597" y2="150.30" stroke="#303030" stroke-width="1"/>
<line x1="595" y1="165.20" x2="600" y2="165.20" stroke="#303030" stroke-width="1"/>
<path d="M26.7,83.3 L29.8,90.3 L33.0,90.3 L36.2,90.6 L39.3,91.0 L42.5,90.6 L45.7,91.0 L48.8,85.6 L52.0,87.2 L55.2,88.0 L58.3,89.5 L61.5,88.0 L64.7,87.2 L67.9,88.0 L71.0,88.0 L74.2,85.6 L77.4,89.2 L80.5,87.2 L83.7,88.0 L86.9,85.6 L90.0,84.6 L93.2,87.2 L96.4,85.6 L99.5,87.2 L102.7,87.2 L105.9,87.2 L109.0,84.6 L112.2,87.2 L115.4,87.2 L118.5,85.7 L121.7,86.8 L124.9,84.8 L128.0,90.3 L131.2,88.8 L134.4,88.8 L137.5,83.7 L140.7,85.7 L143.9,86.8 L147.1,87.2 L150.2,87.5 L153.4,87.9 L156.6,87.2 L159.7,86.8 L162.9,87.9 L166.1,87.2 L169.2,87.5 L172.4,87.9 L175.6,90.3 L178.7,90.3 L181.9,88.8 L185.1,87.5 L188.2,88.8 L191.4,90.3 L194.6,90.3 L197.7,90.3 L200.9,90.3 L204.1,88.8 L207.2,88.8 L210.4,90.3 L213.6,92.2 L216.7,92.2 L219.9,92.2 L223.1,92.2 L226.3,89.9 L229.4,90.9 L232.6,89.9 L235.8,90.9 L238.9,92.5 L242.1,89.9 L245.3,89.9 L248.4,92.5 L251.6,90.9 L254.8,89.9 L257.9,88.8 L261.1,90.3 L264.3,92.5 L267.4,89.9 L270.6,92.2 L273.8,92.2 L276.9,92.2 L280.1,88.8 L283.3,88.8 L286.4,87.5 L289.6,87.5 L292.8,87.5 L295.9,87.5 L299.1,89.1 L302.3,89.1 L305.5,85.2 L308.6,87.5 L311.8,87.5 L315.0,88.0 L318.1,89.0 L321.3,89.0 L324.5,90.6 L327.6,91.5 L330.8,88.7 L334.0,90.6 L337.1,91.0 L340.3,91.0 L343.5,79.5 L346.6,79.5 L349.8,82.5 L353.0,79.8 L356.1,84.1 L359.3,81.8 L362.5,85.3 L365.6,85.3 L368.8,85.3 L372.0,85.3 L375.1,87.5 L378.3,85.3 L381.5,83.3 L384.7,83.8 L387.8,83.8 L391.0,85.3 L394.2,85.3 L397.3,87.5 L400.5,84.9 L403.7,89.0 L406.8,87.5 L410.0,85.9 L413.2,84.9 L416.3,87.2 L419.5,88.0 L422.7,85.9 L425.8,85.9 L429.0,85.9 L432.2,87.5 L435.3,85.9 L438.5,84.9 L441.7,85.9 L444.8,85.9 L448.0,88.0 L451.2,85.3 L454.3,87.2 L457.5,89.0 L460.7,87.5 L463.9,86.9 L467.0,86.9 L470.2,89.0 L473.4,86.9 L476.5,86.9 L479.7,86.9 L482.9,89.0 L486.0,87.5 L489.2,89.0 L492.4,86.9 L495.5,87.5 L498.7,87.5 L501.9,87.5 L505.0,87.5 L508.2,85.3 L511.4,88.0 L514.5,87.2 L517.7,85.3 L520.9,88.0 L524.0,89.0 L527.2,89.0 L530.4,87.5 L533.5,86.9 L536.7,86.9 L539.9,89.0 L543.1,89.0 L546.2,89.0 L549.4,89.0 L552.6,86.9 L555.7,89.0 L558.9,86.9 L562.1,87.5 L565.2,89.0 L568.4,83.3 L571.6,87.5 L574.7,87.5 L577.9,87.2 L581.1,87.2 L584.2,85.3 L587.4,83.3 L590.6,83.3 L593.7,83.8" fill="none" stroke="#00ffff" stroke-width="1"/>
<rect x="25.32" y="81.97" width="2.7" height="2.7" rx="0.7" fill="#ff0000"/>
<rect x="28.49" y="88.93" width="2.7" height="2.7" rx="0.7" fill="#ff0000"/>
<rect x="31.65" y="88.93" width="2.7" height="2.7" rx="0.7" fill="#ff0000"/>
<rect x="34.82" y="89.23" width="2.7" height="2.7" rx="0.7" fill="#ff0000"/>
<rect x="37.99" y="89.70" width="2.7" height="2.7" rx="0.7" fill="#ff0000"/>
<rect x="41.16" y="89.23" width="2.7" height="2.7" rx="0.7" fill="#ff0000"/>
<rect x="44.33" y="89.70" width="2.7" height="2.7" rx="0.7" fill="#ff0000"/>
<rect x="47.49" y="84.29" width="2.7" height="2.7" rx="0.7" fill="#ff0000"/>
<rect x="50.66" y="85.83" width="2.7" height="2.7" rx="0.7" fill="#ff0000"/>
<rect x="53.83" y="86.61" width="2.7" height="2.7" rx="0.7" fill="#ff0000"/>
<rect x="57.00" y="88.15" width="2.7" height="2.7" rx="0.7" fill="#ff0000"/>
<rect x="60.17" y="86.61" width="2.7" height="2.7" rx="0.7" fill="#ff0000"/>
<rect x="63.33" y="85.83" width="2.7" height="2.7" rx="0.7" fill="#ff0000"/>
<rect x="66.50" y="86.61" width="2.7" height="2.7" rx="0.7" fill="#ff0000"/>
<rect x="69.67" y="86.61" width="2.7" height="2.7" rx="0.7" fill="#ff0000"/>
<rect x="72.84" y="84.29" width="2.7" height="2.7" rx="0.7" fill="#ff0000"/>
<rect x="76.01" y="87.84" width="2.7" height="2.7" rx="0.7" fill="#ff0000"/>
<rect x="79.17" y="85.83" width="2.7" height="2.7" rx="0.7" fill="#ff0000"/>
<rect x="82.34" y="86.61" width="2.7" height="2.7" rx="0.7" fill="#ff0000"/>
<rect x="85.51" y="84.29" width="2.7" height="2.7" rx="0.7" fill="#ff0000"/>
<rect x="88.68" y="83.21" width="2.7" height="2.7" rx="0.7" fill="#ff0000"/>
<rect x="91.85" y="85.83" width="2.7" height="2.7" rx="0.7" fill="#ff0000"/>
<rect x="95.01" y="84.29" width="2.7" height="2.7" rx="0.7" fill="#ff0000"/>
<rect x="98.18" y="85.83" width="2.7" height="2.7" rx="0.7" fill="#ff0000"/>
<rect x="101.35" y="85.83" width="2.7" height="2.7" rx="0.7" fill="#ff0000"/>
<rect x="104.52" y="85.83" width="2.7" height="2.7" rx="0.7" fill="#ff0000"/>
<rect x="107.69" y="83.21" width="2.7" height="2.7" rx="0.7" fill="#ff0000"/>
<rect x="110.85" y="85.83" width="2.7" height="2.7" rx="0.7" fill="#ff0000"/>
<rect x="114.02" y="85.83" width="2.7" height="2.7" rx="0.7" fill="#ff0000"/>
<rect x="117.19" y="84.34" width="2.7" height="2.7" rx="0.7" fill="#ff0000"/>
<rect x="120.36" y="85.42" width="2.7" height="2.7" rx="0.7" fill="#ff0000"/>
<rect x="123.53" y="83.42" width="2.7" height="2.7" rx="0.7" fill="#ff0000"/>
<rect x="126.69" y="88.98" width="2.7" height="2.7" rx="0.7" fill="#ff0000"/>
<rect x="129.86" y="87.43" width="2.7" height="2.7" rx="0.7" fill="#ff0000"/>
<rect x="133.03" y="87.43" width="2.7" height="2.7" rx="0.7" fill="#ff0000"/>
<rect x="136.20" y="82.33" width="2.7" height="2.7" rx="0.7" fill="#ff0000"/>
<rect x="139.37" y="84.34" width="2.7" height="2.7" rx="0.7" fill="#ff0000"/>
<rect x="142.53" y="85.42" width="2.7" height="2.7" rx="0.7" fill="#ff0000"/>
<rect x="145.70" y="85.89" width="2.7" height="2.7" rx="0.7" fill="#ff0000"/>
<rect x="148.87" y="86.20" width="2.7" height="2.7" rx="0.7" fill="#ff0000"/>
<rect x="152.04" y="86.51" width="2.7" height="2.7" rx="0.7" fill="#ff0000"/>
<rect x="155.21" y="85.89" width="2.7" height="2.7" rx="0.7" fill="#ff0000"/>
<rect x="158.37" y="85.42" width="2.7" height="2.7" rx="0.7" fill="#ff0000"/>
<rect x="161.54" y="86.51" width="2.7" height="2.7" rx="0.7" fill="#ff0000"/>
<rect x="164.71" y="85.89" width="2.7" height="2.7" rx="0.7" fill="#ff0000"/>
<rect x="167.88" y="86.20" width="2.7" height="2.7" rx="0.7" fill="#ff0000"/>
<rect x="171.05" y="86.51" width="2.7" height="2.7" rx="0.7" fill="#ff0000"/>
<rect x="174.21" y="88.98" width="2.7" height="2.7" rx="0.7" fill="#ff0000"/>
<rect x="177.38" y="88.98" width="2.7" height="2.7" rx="0.7" fill="#ff0000"/>
<rect x="180.55" y="87.43" width="2.7" height="2.7" rx="0.7" fill="#ff0000"/>
<rect x="183.72" y="86.20" width="2.7" height="2.7" rx="0.7" fill="#ff0000"/>
<rect x="186.89" y="87.43" width="2.7" height="2.7" rx="0.7" fill="#ff0000"/>
<rect x="190.05" y="88.98" width="2.7" height="2.7" rx="0.7" fill="#ff0000"/>
<rect x="193.22" y="88.98" width="2.7" height="2.7" rx="0.7" fill="#ff0000"/>
<rect x="196.39" y="88.98" width="2.7" height="2.7" rx="0.7" fill="#ff0000"/>
<rect x="199.56" y="88.98" width="2.7" height="2.7" rx="0.7" fill="#ff0000"/>
<rect x="202.73" y="87.43" width="2.7" height="2.7" rx="0.7" fill="#ff0000"/>
<rect x="205.89" y="87.43" width="2.7" height="2.7" rx="0.7" fill="#ff0000"/>
<rect x="209.06" y="88.98" width="2.7" height="2.7" rx="0.7" fill="#ff0000"/>
<rect x="212.23" y="90.83" width="2.7" height="2.7" rx="0.7" fill="#ff0000"/>
<rect x="215.40" y="90.83" width="2.7" height="2.7" rx="0.7" fill="#ff0000"/>
<rect x="218.57" y="90.83" width="2.7" height="2.7" rx="0.7" fill="#ff0000"/>
<rect x="221.73" y="90.83" width="2.7" height="2.7" rx="0.7" fill="#ff0000"/>
<rect x="224.90" y="88.52" width="2.7" height="2.7" rx="0.7" fill="#ff0000"/>
<rect x="228.07" y="89.60" width="2.7" height="2.7" rx="0.7" fill="#ff0000"/>
<rect x="231.24" y="88.52" width="2.7" height="2.7" rx="0.7" fill="#ff0000"/>
<rect x="234.41" y="89.60" width="2.7" height="2.7" rx="0.7" fill="#ff0000"/>
<rect x="237.57" y="91.14" width="2.7" height="2.7" rx="0.7" fill="#ff0000"/>
<rect x="240.74" y="88.52" width="2.7" height="2.7" rx="0.7" fill="#ff0000"/>
<rect x="243.91" y="88.52" width="2.7" height="2.7" rx="0.7" fill="#ff0000"/>
<rect x="247.08" y="91.14" width="2.7" height="2.7" rx="0.7" fill="#ff0000"/>
<rect x="250.25" y="89.60" width="2.7" height="2.7" rx="0.7" fill="#ff0000"/>
<rect x="253.41" y="88.52" width="2.7" height="2.7" rx="0.7" fill="#ff0000"/>
<rect x="256.58" y="87.43" width="2.7" height="2.7" rx="0.7" fill="#ff0000"/>
<rect x="259.75" y="88.98" width="2.7" height="2.7" rx="0.7" fill="#ff0000"/>
<rect x="262.92" y="91.14" width="2.7" height="2.7" rx="0.7" fill="#ff0000"/>
<rect x="266.09" y="88.52" width="2.7" height="2.7" rx="0.7" fill="#ff0000"/>
<rect x="269.25" y="90.83" width="2.7" height="2.7" rx="0.7" fill="#ff0000"/>
<rect x="272.42" y="90.83" width="2.7" height="2.7" rx="0.7" fill="#ff0000"/>
<rect x="275.59" y="90.83" width="2.7" height="2.7" rx="0.7" fill="#ff0000"/>
<rect x="278.76" y="87.43" width="2.7" height="2.7" rx="0.7" fill="#ff0000"/>
<rect x="281.93" y="87.43" width="2.7" height="2.7" rx="0.7" fill="#ff0000"/>
<rect x="285.09" y="86.20" width="2.7" height="2.7" rx="0.7" fill="#ff0000"/>
<rect x="288.26" y="86.20" width="2.7" height="2.7" rx="0.7" fill="#ff0000"/>
<rect x="291.43" y="86.20" width="2.7" height="2.7" rx="0.7" fill="#ff0000"/>
<rect x="294.60" y="86.20" width="2.7" height="2.7" rx="0.7" fill="#ff0000"/>
<rect x="297.77" y="87.74" width="2.7" height="2.7" rx="0.7" fill="#ff0000"/>
<rect x="300.93" y="87.74" width="2.7" height="2.7" rx="0.7" fill="#ff0000"/>
<rect x="304.10" y="83.88" width="2.7" height="2.7" rx="0.7" fill="#ff0000"/>
<rect x="307.27" y="86.20" width="2.7" height="2.7" rx="0.7" fill="#ff0000"/>
<rect x="310.44" y="86.14" width="2.7" height="2.7" rx="0.7" fill="#ff0000"/>
<rect x="313.61" y="86.61" width="2.7" height="2.7" rx="0.7" fill="#ff0000"/>
<rect x="316.77" y="87.69" width="2.7" height="2.7" rx="0.7" fill="#ff0000"/>
<rect x="319.94" y="87.69" width="2.7" height="2.7" rx="0.7" fill="#ff0000"/>
<rect x="323.11" y="89.23" width="2.7" height="2.7" rx="0.7" fill="#ff0000"/>
<rect x="326.28" y="90.16" width="2.7" height="2.7" rx="0.7" fill="#ff0000"/>
<rect x="329.45" y="87.38" width="2.7" height="2.7" rx="0.7" fill="#ff0000"/>
<rect x="332.61" y="89.23" width="2.7" height="2.7" rx="0.7" fill="#ff0000"/>
<rect x="335.78" y="89.70" width="2.7" height="2.7" rx="0.7" fill="#ff0000"/>
<rect x="338.95" y="89.70" width="2.7" height="2.7" rx="0.7" fill="#ff0000"/>
<rect x="342.12" y="78.11" width="2.7" height="2.7" rx="0.7" fill="#ff0000"/>
<rect x="345.29" y="78.11" width="2.7" height="2.7" rx="0.7" fill="#ff0000"/>
<rect x="348.45" y="81.20" width="2.7" height="2.7" rx="0.7" fill="#ff0000"/>
<rect x="351.62" y="78.42" width="2.7" height="2.7" rx="0.7" fill="#ff0000"/>
<rect x="354.79" y="82.74" width="2.7" height="2.7" rx="0.7" fill="#ff0000"/>
<rect x="357.96" y="80.42" width="2.7" height="2.7" rx="0.7" fill="#ff0000"/>
<rect x="361.13" y="83.98" width="2.7" height="2.7" rx="0.7" fill="#ff0000"/>
<rect x="364.29" y="83.98" width="2.7" height="2.7" rx="0.7" fill="#ff0000"/>
<rect x="367.46" y="83.98" width="2.7" height="2.7" rx="0.7" fill="#ff0000"/>
<rect x="370.63" y="83.98" width="2.7" height="2.7" rx="0.7" fill="#ff0000"/>
<rect x="373.80" y="86.14" width="2.7" height="2.7" rx="0.7" fill="#ff0000"/>
<rect x="376.97" y="83.98" width="2.7" height="2.7" rx="0.7" fill="#ff0000"/>
<rect x="380.13" y="81.97" width="2.7" height="2.7" rx="0.7" fill="#ff0000"/>
<rect x="383.30" y="82.43" width="2.7" height="2.7" rx="0.7" fill="#ff0000"/>
<rect x="386.47" y="82.43" width="2.7" height="2.7" rx="0.7" fill="#ff0000"/>
<rect x="389.64" y="83.98" width="2.7" height="2.7" rx="0.7" fill="#ff0000"/>
<rect x="392.81" y="83.98" width="2.7" height="2.7" rx="0.7" fill="#ff0000"/>
<rect x="395.97" y="86.14" width="2.7" height="2.7" rx="0.7" fill="#ff0000"/>
<rect x="399.14" y="83.52" width="2.7" height="2.7" rx="0.7" fill="#ff0000"/>
<rect x="402.31" y="87.69" width="2.7" height="2.7" rx="0.7" fill="#ff0000"/>
<rect x="405.48" y="86.14" width="2.7" height="2.7" rx="0.7" fill="#ff0000"/>
<rect x="408.65" y="84.60" width="2.7" height="2.7" rx="0.7" fill="#ff0000"/>
<rect x="411.81" y="83.52" width="2.7" height="2.7" rx="0.7" fill="#ff0000"/>
<rect x="414.98" y="85.83" width="2.7" height="2.7" rx="0.7" fill="#ff0000"/>
<rect x="418.15" y="86.61" width="2.7" height="2.7" rx="0.7" fill="#ff0000"/>
<rect x="421.32" y="84.60" width="2.7" height="2.7" rx="0.7" fill="#ff0000"/>
<rect x="424.49" y="84.60" width="2.7" height="2.7" rx="0.7" fill="#ff0000"/>
<rect x="427.65" y="84.60" width="2.7" height="2.7" rx="0.7" fill="#ff0000"/>
<rect x="430.82" y="86.14" width="2.7" height="2.7" rx="0.7" fill="#ff0000"/>
<rect x="433.99" y="84.60" width="2.7" height="2.7" rx="0.7" fill="#ff0000"/>
<rect x="437.16" y="83.52" width="2.7" height="2.7" rx="0.7" fill="#ff0000"/>
<rect x="440.33" y="84.60" width="2.7" height="2.7" rx="0.7" fill="#ff0000"/>
<rect x="443.49" y="84.60" width="2.7" height="2.7" rx="0.7" fill="#ff0000"/>
<rect x="446.66" y="86.61" width="2.7" height="2.7" rx="0.7" fill="#ff0000"/>
<rect x="449.83" y="83.98" width="2.7" height="2.7" rx="0.7" fill="#ff0000"/>
<rect x="453.00" y="85.83" width="2.7" height="2.7" rx="0.7" fill="#ff0000"/>
<rect x="456.17" y="87.69" width="2.7" height="2.7" rx="0.7" fill="#ff0000"/>
<rect x="459.33" y="86.14" width="2.7" height="2.7" rx="0.7" fill="#ff0000"/>
<rect x="462.50" y="85.52" width="2.7" height="2.7" rx="0.7" fill="#ff0000"/>
<rect x="465.67" y="85.52" width="2.7" height="2.7" rx="0.7" fill="#ff0000"/>
<rect x="468.84" y="87.69" width="2.7" height="2.7" rx="0.7" fill="#ff0000"/>
<rect x="472.01" y="85.52" width="2.7" height="2.7" rx="0.7" fill="#ff0000"/>
<rect x="475.17" y="85.52" width="2.7" height="2.7" rx="0.7" fill="#ff0000"/>
<rect x="478.34" y="85.52" width="2.7" height="2.7" rx="0.7" fill="#ff0000"/>
<rect x="481.51" y="87.69" width="2.7" height="2.7" rx="0.7" fill="#ff0000"/>
<rect x="484.68" y="86.14" width="2.7" height="2.7" rx="0.7" fill="#ff0000"/>
<rect x="487.85" y="87.69" width="2.7" height="2.7" rx="0.7" fill="#ff0000"/>
<rect x="491.01" y="85.52" width="2.7" height="2.7" rx="0.7" fill="#ff0000"/>
<rect x="494.18" y="86.14" width="2.7" height="2.7" rx="0.7" fill="#ff0000"/>
<rect x="497.35" y="86.14" width="2.7" height="2.7" rx="0.7" fill="#ff0000"/>
<rect x="500.52" y="86.14" width="2.7" height="2.7" rx="0.7" fill="#ff0000"/>
<rect x="503.69" y="86.14" width="2.7" height="2.7" rx="0.7" fill="#ff0000"/>
<rect x="506.85" y="83.98" width="2.7" height="2.7" rx="0.7" fill="#ff0000"/>
<rect x="510.02" y="86.61" width="2.7" height="2.7" rx="0.7" fill="#ff0000"/>
<rect x="513.19" y="85.83" width="2.7" height="2.7" rx="0.7" fill="#ff0000"/>
<rect x="516.36" y="83.98" width="2.7" height="2.7" rx="0.7" fill="#ff0000"/>
<rect x="519.53" y="86.61" width="2.7" height="2.7" rx="0.7" fill="#ff0000"/>
<rect x="522.69" y="87.69" width="2.7" height="2.7" rx="0.7" fill="#ff0000"/>
<rect x="525.86" y="87.69" width="2.7" height="2.7" rx="0.7" fill="#ff0000"/>
<rect x="529.03" y="86.14" width="2.7" height="2.7" rx="0.7" fill="#ff0000"/>
<rect x="532.20" y="85.52" width="2.7" height="2.7" rx="0.7" fill="#ff0000"/>
<rect x="535.37" y="85.52" width="2.7" height="2.7" rx="0.7" fill="#ff0000"/>
<rect x="538.53" y="87.69" width="2.7" height="2.7" rx="0.7" fill="#ff0000"/>
<rect x="541.70" y="87.69" width="2.7" height="2.7" rx="0.7" fill="#ff0000"/>
<rect x="544.87" y="87.69" width="2.7" height="2.7" rx="0.7" fill="#ff0000"/>
<rect x="548.04" y="87.69" width="2.7" height="2.7" rx="0.7" fill="#ff0000"/>
<rect x="551.21" y="85.52" width="2.7" height="2.7" rx="0.7" fill="#ff0000"/>
<rect x="554.37" y="87.69" width="2.7" height="2.7" rx="0.7" fill="#ff0000"/>
<rect x="557.54" y="85.52" width="2.7" height="2.7" rx="0.7" fill="#ff0000"/>
<rect x="560.71" y="86.14" width="2.7" height="2.7" rx="0.7" fill="#ff0000"/>
<rect x="563.88" y="87.69" width="2.7" height="2.7" rx="0.7" fill="#ff0000"/>
<rect x="567.05" y="81.97" width="2.7" height="2.7" rx="0.7" fill="#ff0000"/>
<rect x="570.21" y="86.14" width="2.7" height="2.7" rx="0.7" fill="#ff0000"/>
<rect x="573.38" y="86.14" width="2.7" height="2.7" rx="0.7" fill="#ff0000"/>
<rect x="576.55" y="85.83" width="2.7" height="2.7" rx="0.7" fill="#ff0000"/>
<rect x="579.72" y="85.83" width="2.7" height="2.7" rx="0.7" fill="#ff0000"/>
<rect x="582.89" y="83.98" width="2.7" height="2.7" rx="0.7" fill="#ff0000"/>
<rect x="586.05" y="81.97" width="2.7" height="2.7" rx="0.7" fill="#ff0000"/>
<rect x="589.22" y="81.97" width="2.7" height="2.7" rx="0.7" fill="#ff0000"/>
<rect x="592.39" y="82.43" width="2.7" height="2.7" rx="0.7" fill="#ff0000"/></svg>
<div class="a" style="left:8px;top:223px;width:22px;height:19px;background:#ececec;border:1px solid;border-color:#fcfcfc #a8a8a8 #909090 #fcfcfc"></div>
<svg class="a" style="left:12px;top:224px" width="16" height="16" viewBox="0 0 16 16"><defs><linearGradient id="ag221" x1="0" y1="0" x2="0" y2="1"><stop offset="0" stop-color="#9cccff"/><stop offset="0.45" stop-color="#6aaaf0"/><stop offset="1" stop-color="#1e6ee0"/></linearGradient></defs><path d="M4.5 0.5 L8.5 5 L6.2 5 L6.2 10 L8.5 10 L4.5 14.5 L0.5 10 L2.8 10 L2.8 5 L0.5 5 Z" fill="url(#ag221)"/><text x="8.8" y="11.5" font-family="Liberation Sans" font-weight="bold" font-size="9" fill="#202020">?</text></svg>
<div class="t" style="left:-19.5px;top:393px;width:100px;text-align:center;font-size:8.5px;transform:scaleX(0.8);transform-origin:50% 0;color:#202020">00:00:00</div>
<div class="t" style="left:75.5px;top:393px;width:100px;text-align:center;font-size:8.5px;transform:scaleX(0.8);transform-origin:50% 0;color:#202020">00:20:00</div>
<div class="t" style="left:170.6px;top:393px;width:100px;text-align:center;font-size:8.5px;transform:scaleX(0.8);transform-origin:50% 0;color:#202020">00:40:00</div>
<div class="t" style="left:265.6px;top:393px;width:100px;text-align:center;font-size:8.5px;transform:scaleX(0.8);transform-origin:50% 0;color:#202020">01:00:00</div>
<div class="t" style="left:360.7px;top:393px;width:100px;text-align:center;font-size:8.5px;transform:scaleX(0.8);transform-origin:50% 0;color:#202020">01:20:00</div>
<div class="t" style="left:455.7px;top:393px;width:100px;text-align:center;font-size:8.5px;transform:scaleX(0.8);transform-origin:50% 0;color:#202020">01:40:00</div>
<div class="t" style="left:550.7px;top:393px;width:100px;text-align:center;font-size:8.5px;transform:scaleX(0.8);transform-origin:50% 0;color:#202020">02:00:00</div>
<div class="t" style="left:608px;top:232.9px;font-size:8.5px;transform:scaleX(0.76);transform-origin:0 0;color:#202020">100,0 %</div>
<div class="t" style="left:608px;top:262.7px;font-size:8.5px;transform:scaleX(0.76);transform-origin:0 0;color:#202020">80,0 %</div>
<div class="t" style="left:608px;top:292.5px;font-size:8.5px;transform:scaleX(0.76);transform-origin:0 0;color:#202020">60,0 %</div>
<div class="t" style="left:608px;top:322.3px;font-size:8.5px;transform:scaleX(0.76);transform-origin:0 0;color:#202020">40,0 %</div>
<div class="t" style="left:608px;top:352.1px;font-size:8.5px;transform:scaleX(0.76);transform-origin:0 0;color:#202020">20,0 %</div>
<div class="t" style="left:608px;top:381.9px;font-size:8.5px;transform:scaleX(0.76);transform-origin:0 0;color:#202020">0,0 %</div>
<!-- bottom area -->
<div class="a" style="left:7px;top:403px;width:635px;height:83px;background:linear-gradient(90deg,#e2eaf6 0,#e6edf8 85%,#eef2f7 88%,#f2f4f6 100%)"></div>
<div class="a" style="left:7px;top:403px;width:635px;height:1px;background:#8c8c8c"></div>
<div class="a" style="left:7px;top:404px;width:635px;height:3px;background:linear-gradient(90deg,#5b8ed0 0,#6a9ad8 15.7%,#90b4e0 36%,#a8c8ec 52%,#d0e4f8 75.6%,#f4f8fc 94.5%,#fafafa 100%)"></div>
<div class="a" style="left:7px;top:480px;width:635px;height:6px;background:linear-gradient(90deg,#5b8ed0 0,#6a9ad8 15.7%,#90b4e0 36%,#a8c8ec 52%,#d0e4f8 75.6%,#f4f8fc 94.5%,#fafafa 100%)"></div>
<div class="a" style="left:7px;top:407px;width:537px;height:73px;background:#c0c0c0;border-top:1px solid #e6e6e6;border-left:1px solid #e6e6e6;border-right:1px solid #909090;border-bottom:1px solid #a0a0a0"></div>
<div class="a" style="left:537px;top:408px;width:6px;height:71px;background:#b8b8b8"></div>
<div class="t b" style="left:20px;top:415px;font-size:9px">Ensayo :</div>
<div class="a" style="left:60px;top:412px;width:195px;height:13px;background:#ffdcb8;border:1px solid #404040"></div>
<div class="t b" style="left:60px;top:415px;width:193px;text-align:right;font-size:9px">mas pruebas</div>
<div class="t b" style="left:25px;top:431px;font-size:9px">Fecha :</div>
<div class="a" style="left:60px;top:428px;width:66px;height:13px;background:#ffdcb8;border:1px solid #404040"></div>
<div class="t b" style="left:60px;top:431px;width:65px;text-align:right;font-size:9px">13/03/2009</div>
<div class="t b" style="left:160px;top:431px;font-size:9px">Hora :</div>
<div class="a" style="left:189px;top:428px;width:66px;height:13px;background:#ffdcb8;border:1px solid #404040"></div>
<div class="t b" style="left:189px;top:431px;width:64px;text-align:right;font-size:9px">14:50:07</div>
<div class="t b" style="left:29px;top:447px;font-size:9px">Muestreo (Seg.) :</div>
<div class="a" style="left:107px;top:444px;width:37px;height:13px;background:#ffdcb8;border:1px solid #404040"></div>
<div class="t b" style="left:107px;top:447px;width:37px;text-align:center;font-size:9px">40</div>
<div class="t b" style="left:17px;top:463px;font-size:9px">Cantidad de Datos :</div>
<div class="a" style="left:107px;top:460px;width:64px;height:13px;background:#ffdcb8;border:1px solid #404040"></div>
<div class="t b" style="left:107px;top:463px;width:64px;text-align:center;font-size:9px">4096</div>
<div class="t b" style="left:207px;top:463px;font-size:9px">Comentario :</div>
<div class="a" style="left:264px;top:411px;width:262px;height:62px;background:#ffdcb8;border:1px solid;border-color:#404040 #fff6dc #fff6dc #404040;box-shadow:1px 1px 0 #404040"></div>
<div class="a" style="left:527px;top:411px;width:9px;height:62px;background:#f2f2f2"></div>
<div class="a" style="left:527px;top:411px;width:9px;height:11px;background:#fafafa"></div>
<div class="a" style="left:527px;top:422px;width:9px;height:28px;background:linear-gradient(90deg,#ececec,#d4d4d4)"></div>
<div class="a" style="left:529px;top:433px;width:5px;height:5px;background:repeating-linear-gradient(#8c8c8c 0,#8c8c8c 1px,#e4e4e4 1px,#e4e4e4 2px)"></div>
<svg class="a" style="left:527px;top:411px" width="9" height="62"><path d="M2.6 6 L4.5 4 L6.4 6 Z" fill="#303030"/><path d="M2.6 56 L4.5 58 L6.4 56 Z" fill="#303030"/></svg>
<div class="t" style="left:266px;top:413px;font-size:8.3px;line-height:10px;color:#181818">inicio de comentario<br>as asd sad<br>d asd<br>asdas<br>asd</div>

<!-- buttons -->
<div class="a" style="left:557px;top:411px;width:79px;height:34px;background:#99bbff;border:2px solid #585858;border-radius:1px;box-shadow:0 0 0 1px #fff,inset 1px 1px 0 #c4d8f8"></div>
<svg class="a" style="left:584px;top:412px" width="26" height="22" viewBox="0 0 26 22"><path d="M3 5.3 L15.4 2.6 L21.5 14.5 L7.5 19.7 Z" fill="#f4dc78" stroke="#e0b848" stroke-width="0.9" stroke-linejoin="round"/><path d="M4.6 6.6 L14.6 4.4 L19.6 14 L8.2 18.2 Z" fill="#fbeeb0"/><path d="M6 8.5 L14.5 6.6 M7 11 L15.8 9 M8 13.5 L17 11.5 M9 16 L17.8 14" stroke="#e8c870" stroke-width="0.7"/><path d="M16.7 15.4 L20.6 19.3" stroke="#e85818" stroke-width="2.4" stroke-linecap="round"/><path d="M17.2 15.6 L19.8 18.2" stroke="#ffb040" stroke-width="0.9"/><circle cx="12.7" cy="11.8" r="3.9" fill="#c8e8ff" stroke="#587898" stroke-width="1"/><circle cx="11.8" cy="10.8" r="1.5" fill="#eef8ff"/></svg>
<div class="t" style="left:562px;top:434.5px;font-size:7.4px;transform:scaleX(0.9);transform-origin:0 0;color:#000"><u>V</u>er 15 últimos ensayos</div>
<div class="a" style="left:558px;top:452px;width:77px;height:27px;background:#ffbbbb;border:2px solid #585858;border-radius:1px;box-shadow:0 0 0 1px #fff,inset 1px 1px 0 #ffe0e0"></div>
<svg class="a" style="left:592px;top:456px" width="9" height="9" viewBox="0 0 9 9"><rect width="9" height="9" fill="#d01818"/><path d="M2.3 2.3 L6.7 6.7 M6.7 2.3 L2.3 6.7" stroke="#fff" stroke-width="1.8"/></svg>
<div class="t" style="left:588px;top:468px;font-size:8px;transform:scaleX(0.78);transform-origin:0 0;color:#202020"><u>C</u>errar</div>

<!-- cursor -->
<svg class="a" style="left:2px;top:328px" width="8" height="18" viewBox="0 0 8 18"><path d="M4.8 1.5 L1.6 14.5 L4.6 16.6 L6 16 L6 1.5 Z" fill="#fff"/><path d="M4.8 1.5 L1.6 14.5 L4.6 16.6" fill="none" stroke="#101010" stroke-width="0.9" stroke-linejoin="round"/><path d="M3.4 13.2 L4.4 11.8 L4.8 14.2 Z" fill="#000"/></svg>
<!-- status bar -->
<div class="a" style="left:2px;top:486px;width:643px;height:13px;background:linear-gradient(#fafafa,#f2f2f2);border-top:1px solid #dcdcdc"></div>
<svg class="a" style="left:4px;top:488px" width="10" height="10" viewBox="0 0 10 10"><circle cx="5" cy="5" r="3.6" fill="#c8d8f0" stroke="#7890b0" stroke-width="1.6" stroke-dasharray="1.4 1"/><circle cx="5" cy="5" r="1.6" fill="#e8f0fa"/></svg>
<div class="t b" style="left:16px;top:490px;font-size:7.5px;color:#1e50a8">Data Logger Reader</div>
<div class="t" style="left:113px;top:490px;font-size:7px;color:#000">Sistema listo...</div>
<div class="a" style="left:367px;top:487px;width:1px;height:12px;background:#d0d0d0"></div>
<div class="t" style="left:377px;top:490px;font-size:6.8px;color:#000">Usuario:</div>
<div class="a" style="left:404px;top:486px;width:105px;height:13px;background:#c0ffff"></div>
<div class="t b" style="left:406px;top:490px;font-size:7.3px;color:#ff0000">Secom</div>
<div class="t" style="left:557px;top:490px;font-size:7px;color:#000">15/08/2012</div>
<div class="a" style="left:601px;top:487px;width:1px;height:12px;background:#d0d0d0"></div>
<div class="t" style="left:616px;top:490px;font-size:7.2px;color:#000">10:36:00</div>
</body></html>
